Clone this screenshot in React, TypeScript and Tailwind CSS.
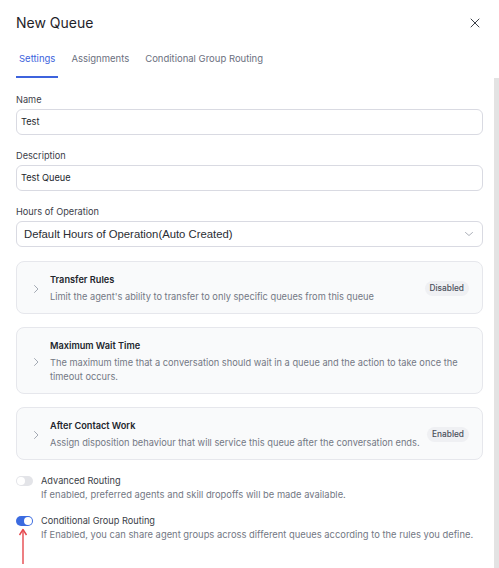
import React from "react";

const font = { fontFamily: "Inter, 'Noto Sans', sans-serif" };

function Chevron() {
  return (
    <svg width="10" height="10" viewBox="0 0 10 10" className="shrink-0">
      <path d="M3.5 1.5 L7 5 L3.5 8.5" fill="none" stroke="#9aa0ab" strokeWidth="0.9" strokeLinecap="round" strokeLinejoin="round" />
    </svg>
  );
}

function Card({ title, desc, badge }: { title: string; desc: string; badge?: string }) {
  return (
    <div className="flex items-center rounded-[8px] border border-[#e6e7ec] bg-[#f9fafb] pl-[14px] pr-[13px] pt-[11px] pb-[9px]">
      <Chevron />
      <div className="ml-[9px] flex-1">
        <div className="text-[9.2px] leading-[14px] font-semibold text-[#23262d]">{title}</div>
        <div className="mt-[3px] text-[9.25px] leading-[14px] text-[#737884]">{desc}</div>
      </div>
      {badge && (
        <div className="ml-[4px] shrink-0 rounded-full bg-[#eff0f3] px-[5px] py-[2px] text-[8.3px] leading-[11px] font-medium text-[#4a4f5a]">
          {badge}
        </div>
      )}
    </div>
  );
}

function Toggle({ on }: { on: boolean }) {
  return on ? (
    <div className="flex h-[10px] w-[17px] items-center justify-end rounded-full bg-[#3b6be0] pr-[1px]">
      <div className="h-[8px] w-[8px] rounded-full bg-white" />
    </div>
  ) : (
    <div className="flex h-[10px] w-[17px] items-center rounded-full bg-[#e3e4e8] pl-[1px]">
      <div className="h-[8px] w-[8px] rounded-full bg-white" />
    </div>
  );
}

export default function App() {
  return (
    <div className="relative flex h-[568px] w-[499px] flex-col overflow-hidden bg-white" style={font}>
      <div className="flex items-center justify-between pl-4 pr-[19px] pt-[14px]">
        <div className="text-[14px] leading-[18px] text-[#1f2329]">New Queue</div>
        <svg width="10" height="10" viewBox="0 0 10 10">
          <path d="M1 1 L9 9 M9 1 L1 9" stroke="#3c4048" strokeWidth="1" strokeLinecap="round" />
        </svg>
      </div>
      <div className="mt-[10px] flex pl-4 text-[9.5px]">
        <div className="flex flex-col">
          <div className="px-[3px] pt-[10px] pb-[10px] leading-[14px] text-[#3d63dd]">Settings</div>
          <div className="h-[2px] bg-[#3d63dd]" />
        </div>
        <div className="ml-[13px] pt-[10px] leading-[14px] text-[#6b7080]">Assignments</div>
        <div className="ml-[16px] pt-[10px] leading-[14px] text-[#6b7080]">Conditional Group Routing</div>
      </div>
      <div className="flex flex-1">
        <div className="flex flex-1 flex-col pl-4 pr-[11px] pt-[15px]">
          <div className="text-[9.2px] leading-[14px] text-[#3c4049]">Name</div>
          <div className="mt-[2px] flex h-[26px] items-center rounded-[6px] border border-[#d9dae2] pl-[4px] text-[9.2px] text-[#23262d]">Test</div>
          <div className="mt-[14px] text-[9.2px] leading-[14px] text-[#3c4049]">Description</div>
          <div className="mt-[2px] flex h-[26px] items-center rounded-[6px] border border-[#d9dae2] pl-[4px] text-[9.2px] text-[#23262d]">Test Queue</div>
          <div className="mt-[14px] text-[9.2px] leading-[14px] text-[#3c4049]">Hours of Operation</div>
          <div className="mt-[2px] flex h-[26px] items-center justify-between rounded-[6px] border border-[#d9dae2] pl-[7px] pr-[8px]">
            <span className="text-[11.3px] text-[#2a2d33]" style={{ fontFamily: "'Liberation Sans', Arial, sans-serif" }}>
              Default Hours of Operation(Auto Created)
            </span>
            <svg width="10" height="8" viewBox="0 0 10 8">
              <path d="M1.5 2.5 L5 5.5 L8.5 2.5" fill="none" stroke="#a3a7b1" strokeWidth="0.9" strokeLinecap="round" strokeLinejoin="round" />
            </svg>
          </div>
          <div className="mt-[14px] flex flex-col gap-[13px]">
            <Card title="Transfer Rules" desc="Limit the agent's ability to transfer to only specific queues from this queue" badge="Disabled" />
            <Card title="Maximum Wait Time" desc="The maximum time that a conversation should wait in a queue and the action to take once the timeout occurs." />
            <Card title="After Contact Work" desc="Assign disposition behaviour that will service this queue after the conversation ends." badge="Enabled" />
          </div>
          <div className="mt-[14px] flex flex-col gap-[13px]">
            <div className="flex">
              <div className="pt-[2px]">
                <Toggle on={false} />
              </div>
              <div className="ml-[8px]">
                <div className="text-[9.2px] leading-[14px] text-[#3a3e47]">Advanced Routing</div>
                <div className="text-[9.4px] leading-[13px] text-[#737884]">If enabled, preferred agents and skill dropoffs will be made available.</div>
              </div>
            </div>
            <div className="flex">
              <div className="relative pt-[2px]">
                <Toggle on={true} />
                <svg className="absolute left-[1px] top-[14px]" width="14" height="40" viewBox="0 0 14 40">
                  <path d="M6 3 L6 36" stroke="#e5484d" strokeWidth="1.4" />
                  <path d="M2.5 7 L6 1.5 L9.5 7" fill="none" stroke="#e5484d" strokeWidth="1.4" strokeLinejoin="round" />
                </svg>
              </div>
              <div className="ml-[8px]">
                <div className="text-[9.2px] leading-[14px] text-[#3a3e47]">Conditional Group Routing</div>
                <div className="text-[9.4px] leading-[13px] text-[#737884]">If Enabled, you can share agent groups across different queues according to the rules you define.</div>
              </div>
            </div>
          </div>
        </div>
        <div className="w-[5px] bg-[#e3e3e3]" />
      </div>
    </div>
  );
}
